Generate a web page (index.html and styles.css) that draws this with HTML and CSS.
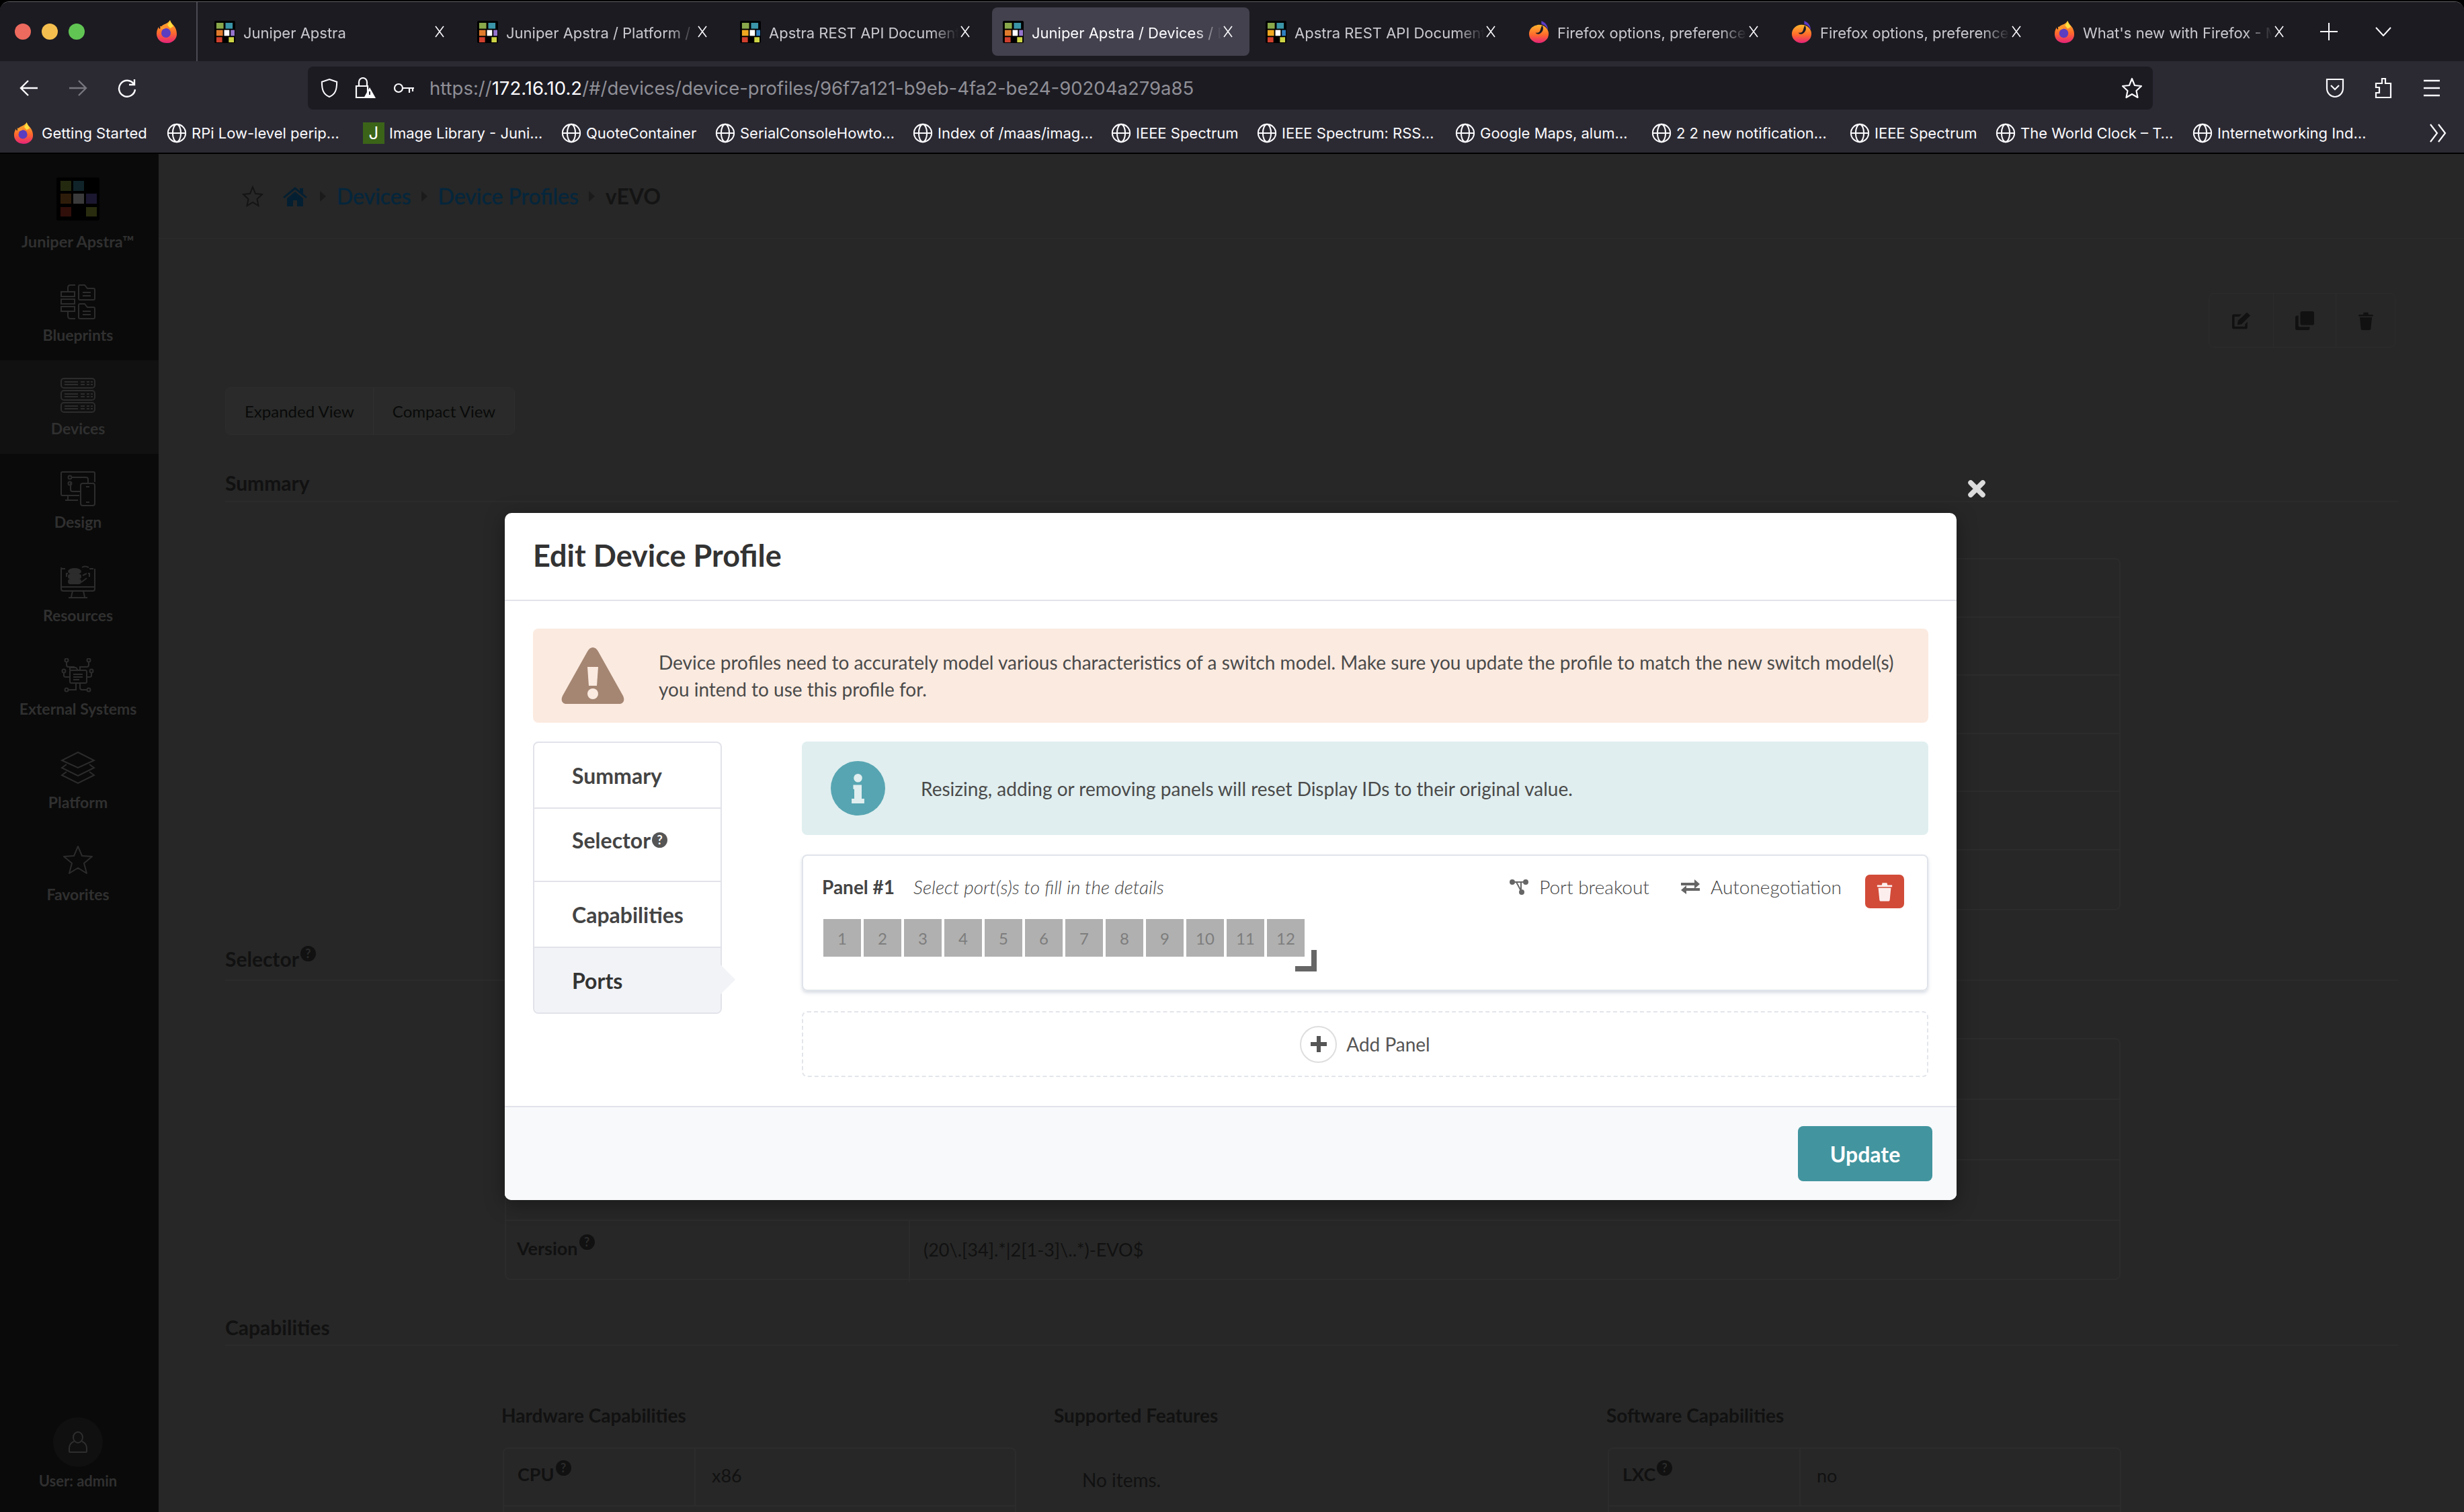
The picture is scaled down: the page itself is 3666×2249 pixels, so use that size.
FILE: index.html
```html
<!DOCTYPE html>
<html lang="en">

<head>
    <meta charset="UTF-8" />
    <meta name="viewport" content="width=device-width, initial-scale=1.0" />
    <title>Juniper Apstra / Devices</title>
    <link rel="stylesheet" href="styles.css">
</head>

<body>
    <svg class="defs" width="0" height="0">
        <defs>
            <linearGradient id="fx_body" x1="0" y1="0" x2="0" y2="1">
                <stop offset="0" stop-color="#ffb52e" />
                <stop offset="0.55" stop-color="#ff6a2b" />
                <stop offset="1" stop-color="#e5227a" />
            </linearGradient>
            <symbol id="firefox" viewBox="0 0 32 34">
                <path d="M21 0c1 4 4 6 7 10 3 5 3 9 3 11 0 7-6 13-15 13S1 28 1 20c0-5 2-8 3-10 0 2 1 3 2 3 1-4 4-6 7-7 3-1 6-3 8-6z" fill="url(#fx_body)" />
                <path d="M21 0c1 4 3 6 5 9l-5 3-4-5c2-2 3-4 4-7z" fill="#ffdf3f" />
                <circle cx="15" cy="19" r="7" fill="#5a3dc0" />
                <path d="M6 9c3 0 6 2 9 2-2 2-6 3-8 2z" fill="#ff9a2e" />
            </symbol>
            <symbol id="firefox_alt" viewBox="0 0 32 34">
                <ellipse cx="16" cy="20" rx="15" ry="14" fill="url(#fx_body)" />
                <path d="M20 0c7 3 10 8 10 14-2-5-5-8-10-9z" fill="#5b3bc4" />
                <path d="M21 7c3 4 2 10-4 13-3 1-5 0-6-2 3 1 6 0 7-3 1-2 1-5 3-8z" fill="#1c1b22" />
            </symbol>
            <symbol id="globe" viewBox="0 0 32 32">
                <g fill="none" stroke="#fbfbfe" stroke-width="2.2">
                    <circle cx="16" cy="16" r="14" />
                    <ellipse cx="16" cy="16" rx="6.5" ry="14" />
                    <path d="M2 16h28" />
                </g>
            </symbol>
            <symbol id="apstra_a" viewBox="0 0 32 34">
                <rect width="32" height="34" rx="2" fill="#000" />
                <rect x="3" y="3" width="11" height="9" fill="#8aa94b" />
                <rect x="17" y="3" width="11" height="9" fill="#3a95a8" />
                <rect x="3" y="14" width="10" height="9" fill="#e07b2c" />
                <rect x="15" y="14" width="8" height="9" fill="#fff" />
                <rect x="25" y="14" width="6" height="9" fill="#9575cd" />
                <rect x="3" y="25" width="9" height="8" fill="#d0402e" />
                <rect x="22" y="25" width="8" height="8" fill="#cdd445" />
            </symbol>
            <symbol id="apstra_b" viewBox="0 0 32 34">
                <rect width="32" height="34" rx="2" fill="#000" />
                <rect x="3" y="3" width="11" height="9" fill="#8aa94b" />
                <rect x="17" y="3" width="11" height="9" fill="#3a95a8" />
                <rect x="3" y="14" width="10" height="9" fill="#f0a820" />
                <rect x="15" y="14" width="8" height="9" fill="#fff" />
                <rect x="25" y="14" width="6" height="9" fill="#2f80c0" />
                <rect x="3" y="25" width="9" height="8" fill="#d0402e" />
                <rect x="22" y="25" width="8" height="8" fill="#cdd445" />
            </symbol>
            <symbol id="tab_x" viewBox="0 0 16 20">
                <path d="M2 2l12 16M14 2L2 18" fill="none" stroke="#fbfbfe" stroke-width="1.6" />
            </symbol>
            <symbol id="trash" viewBox="0 0 28 34">
                <path d="M1 6h26v3H1zM10 2h8l1 4H9z" fill="currentColor" />
                <path d="M3 11h22l-2 20c0 2-1 3-3 3H8c-2 0-3-1-3-3z" fill="currentColor" />
            </symbol>
        </defs>
    </svg>

    <div class="window">
        <header class="tabstrip">
            <div class="tab_lead">
                <span class="light light_red"></span>
                <span class="light light_yellow"></span>
                <span class="light light_green"></span>
                <svg class="lead_fox"><use href="#firefox" /></svg>
            </div>
            <div class="tabs">
                <div class="tab">
                    <svg class="favicon"><use href="#apstra_a" /></svg>
                    <span class="tab_title">Juniper Apstra</span>
                    <svg class="tab_close"><use href="#tab_x" /></svg>
                </div>
                <div class="tab">
                    <svg class="favicon"><use href="#apstra_a" /></svg>
                    <span class="tab_title">Juniper Apstra / Platform /</span>
                    <svg class="tab_close"><use href="#tab_x" /></svg>
                </div>
                <div class="tab">
                    <svg class="favicon"><use href="#apstra_b" /></svg>
                    <span class="tab_title">Apstra REST API Document</span>
                    <svg class="tab_close"><use href="#tab_x" /></svg>
                </div>
                <div class="tab tab_active">
                    <svg class="favicon"><use href="#apstra_a" /></svg>
                    <span class="tab_title">Juniper Apstra / Devices / D</span>
                    <svg class="tab_close"><use href="#tab_x" /></svg>
                </div>
                <div class="tab">
                    <svg class="favicon"><use href="#apstra_b" /></svg>
                    <span class="tab_title">Apstra REST API Document</span>
                    <svg class="tab_close"><use href="#tab_x" /></svg>
                </div>
                <div class="tab">
                    <svg class="favicon"><use href="#firefox_alt" /></svg>
                    <span class="tab_title">Firefox options, preference</span>
                    <svg class="tab_close"><use href="#tab_x" /></svg>
                </div>
                <div class="tab">
                    <svg class="favicon"><use href="#firefox_alt" /></svg>
                    <span class="tab_title">Firefox options, preference</span>
                    <svg class="tab_close"><use href="#tab_x" /></svg>
                </div>
                <div class="tab">
                    <svg class="favicon"><use href="#firefox" /></svg>
                    <span class="tab_title">What's new with Firefox - M</span>
                    <svg class="tab_close"><use href="#tab_x" /></svg>
                </div>
            </div>
            <svg class="strip_plus" viewBox="0 0 26 26"><path d="M13 0v26M0 13h26" stroke="#fbfbfe" stroke-width="2" /></svg>
            <svg class="strip_more" viewBox="0 0 24 14"><path d="M1 1l11 12L23 1" fill="none" stroke="#fbfbfe" stroke-width="2" /></svg>
        </header>

        <div class="toolbar">
            <div class="nav_btns">
                <svg class="nav_icon" viewBox="0 0 28 28"><path d="M27 14H3M13 3L2 14l11 11" fill="none" stroke="#fbfbfe" stroke-width="2.4" /></svg>
                <svg class="nav_icon" viewBox="0 0 28 28"><path d="M1 14h24M15 3l11 11-11 11" fill="none" stroke="#77767f" stroke-width="2.4" /></svg>
                <svg class="nav_icon" viewBox="0 0 28 28"><path d="M24 8a12 12 0 1 0 2 8M25 1v8h-8" fill="none" stroke="#fbfbfe" stroke-width="2.4" /></svg>
            </div>
            <div class="urlbar">
                <svg class="url_shield" viewBox="0 0 28 32"><path d="M14 2l12 4c0 12-2 20-12 24C4 26 2 18 2 6z" fill="none" stroke="#fbfbfe" stroke-width="2.2" /></svg>
                <svg class="url_lock" viewBox="0 0 32 32"><path d="M7 13V7a6 6 0 0 1 12 0v6M3 13h17v17H3z" fill="none" stroke="#fbfbfe" stroke-width="2.2" /><path d="M23 15l9 16H14z" fill="#fbfbfe" /><path d="M23 21v5" stroke="#2b2a33" stroke-width="2" /></svg>
                <svg class="url_key" viewBox="0 0 32 20"><circle cx="8" cy="10" r="6" fill="none" stroke="#fbfbfe" stroke-width="2.2" /><path d="M14 10h17M24 10v7M29 10v5" fill="none" stroke="#fbfbfe" stroke-width="2.2" /></svg>
                <div class="url_text">https://<span class="url_host">172.16.10.2</span>/#/devices/device-profiles/96f7a121-b9eb-4fa2-be24-90204a279a85</div>
                <svg class="url_star" viewBox="0 0 32 32"><path d="M16 2l4 10 10 1-7.500 7 2 10L16 25l-8.500 5 2-10L2 13l10-1z" fill="none" stroke="#fbfbfe" stroke-width="2.2" stroke-linejoin="round" /></svg>
            </div>
            <div class="tool_right">
                <svg class="tool_icon" viewBox="0 0 28 32"><path d="M2 3h24v13c0 8-6 13-12 13S2 24 2 16z" fill="none" stroke="#fbfbfe" stroke-width="2.2" /><path d="M8 12l6 6 6-6" fill="none" stroke="#fbfbfe" stroke-width="2.2" /></svg>
                <svg class="tool_icon" viewBox="0 0 28 32"><path d="M12 2h5v7h8v21H3v-7h5v-8H3V9h9z" fill="none" stroke="#fbfbfe" stroke-width="2.2" /></svg>
                <svg class="tool_icon" viewBox="0 0 28 32"><path d="M2 5h24M2 16h24M2 27h24" stroke="#fbfbfe" stroke-width="2.4" /></svg>
            </div>
        </div>

        <nav class="bookmarks">
            <a class="bm"><svg class="bm_fox"><use href="#firefox" /></svg><span>Getting Started</span></a>
            <a class="bm"><svg class="bm_icon"><use href="#globe" /></svg><span>RPi Low-level perip…</span></a>
            <a class="bm"><span class="bm_j">J</span><span>Image Library - Juni…</span></a>
            <a class="bm"><svg class="bm_icon"><use href="#globe" /></svg><span>QuoteContainer</span></a>
            <a class="bm"><svg class="bm_icon"><use href="#globe" /></svg><span>SerialConsoleHowto…</span></a>
            <a class="bm"><svg class="bm_icon"><use href="#globe" /></svg><span>Index of /maas/imag…</span></a>
            <a class="bm"><svg class="bm_icon"><use href="#globe" /></svg><span>IEEE Spectrum</span></a>
            <a class="bm"><svg class="bm_icon"><use href="#globe" /></svg><span>IEEE Spectrum: RSS…</span></a>
            <a class="bm"><svg class="bm_icon"><use href="#globe" /></svg><span>Google Maps, alum…</span></a>
            <a class="bm"><svg class="bm_icon"><use href="#globe" /></svg><span>2 2 new notification…</span></a>
            <a class="bm"><svg class="bm_icon"><use href="#globe" /></svg><span>IEEE Spectrum</span></a>
            <a class="bm"><svg class="bm_icon"><use href="#globe" /></svg><span>The World Clock – T…</span></a>
            <a class="bm"><svg class="bm_icon"><use href="#globe" /></svg><span>Internetworking Ind…</span></a>
            <svg class="bm_more" viewBox="0 0 26 30"><path d="M2 2l10 13L2 28M14 2l10 13-10 13" fill="none" stroke="#fbfbfe" stroke-width="2.2" /></svg>
        </nav>

        <div class="app">
            <aside class="sidebar">
                <div class="brand">
                    <svg class="brand_logo" viewBox="0 0 64 64">
                        <rect width="64" height="64" rx="3" fill="#000" />
                        <rect x="6" y="5" width="16" height="15" fill="#23290f" />
                        <rect x="25" y="5" width="16" height="15" fill="#0f2328" />
                        <rect x="6" y="24" width="16" height="15" fill="#2e1c0a" />
                        <rect x="25" y="24" width="16" height="15" fill="#3a3a3a" />
                        <rect x="44" y="24" width="16" height="15" fill="#1c1730" />
                        <rect x="6" y="44" width="16" height="14" fill="#300e0a" />
                        <rect x="44" y="44" width="16" height="14" fill="#292c0e" />
                    </svg>
                    <div class="brand_name">Juniper Apstra™</div>
                </div>
                <div class="side_item">
                    <svg class="side_icon" viewBox="0 0 52 52">
                        <rect x="1" y="11" width="20" height="7" /><rect x="1" y="22" width="20" height="7" /><rect x="1" y="33" width="20" height="7" />
                        <path d="M11 11V5q0-4 4-4h7M11 40v7q0 4 4 4h7M27 3q0-2 2-2h7l4 5h9q2 0 2 2v13q0 2-2 2H29q-2 0-2-2zM27 31q0-2 2-2h7l4 5h9q2 0 2 2v13q0 2-2 2H29q-2 0-2-2zM33 12h12M33 17h12M33 40h12M33 45h12" />
                    </svg>
                    <span class="side_label">Blueprints</span>
                </div>
                <div class="side_item side_active">
                    <svg class="side_icon" viewBox="0 0 52 52">
                        <rect x="1" y="1" width="50" height="14" rx="4" /><rect x="1" y="19" width="50" height="14" rx="4" /><rect x="1" y="37" width="50" height="14" rx="4" />
                        <path d="M6 6h20M6 10h20M30 6h6M30 10h6M39 6h4M39 10h4M45 6h3M45 10h3M6 24h20M6 28h20M30 24h6M30 28h6M39 24h4M39 28h4M45 24h3M45 28h3M6 42h20M6 46h20M30 42h6M30 46h6M39 42h4M39 46h4M45 42h3M45 46h3" />
                    </svg>
                    <span class="side_label">Devices</span>
                </div>
                <div class="side_item">
                    <svg class="side_icon" viewBox="0 0 52 52">
                        <path d="M28 36H3q-2 0-2-2V3q0-2 2-2h46q2 0 2 2v13M11 36v7M7 43h19M17 9h21q3 0 3 3v5M17 18h-2v9q0 3 3 3h12" />
                        <circle cx="14" cy="9" r="2.500" /><circle cx="14" cy="18" r="2.500" />
                        <rect x="30" y="18" width="21" height="33" rx="3" />
                        <path d="M38 23h5M38 46h5" />
                    </svg>
                    <span class="side_label">Design</span>
                </div>
                <div class="side_item">
                    <svg class="side_icon" viewBox="0 0 52 52">
                        <path d="M7 6H3q-2 0-2-2v0M1 6v30q0 3 3 3h44q3 0 3-3V6M43 6h6M1 33h50M18 39l-2 9M34 39l2 9M12 49h28M11 13H9v5M41 13h2v5M32 4q4-3 10 0" />
                        <ellipse cx="21" cy="10" rx="9" ry="4" class="side_fill" /><rect x="12" y="15" width="18" height="5" rx="2" class="side_fill" /><rect x="12" y="22" width="18" height="6" rx="3" class="side_fill" />
                        <path d="M33 16l6-3M31 26l8-6" />
                    </svg>
                    <span class="side_label">Resources</span>
                </div>
                <div class="side_item">
                    <svg class="side_icon" viewBox="0 0 52 52">
                        <rect x="14" y="18" width="25" height="19" rx="2" />
                        <path d="M14 18v-4h9l3 4M19 24h14M19 28h14M19 32h9M9 5v5q0 3 3 3h9M42 5v5q0 3-3 3H29v4M5 21v5q0 2 3 2h5M46 21v5q0 2-3 2h-4M23 38v9h-12M29 38v6q0 3 3 3h8" />
                        <circle cx="9" cy="3" r="2.500" /><circle cx="42" cy="3" r="2.500" /><circle cx="5" cy="19" r="2.500" /><circle cx="46" cy="19" r="2.500" /><circle cx="9" cy="47" r="2.500" /><circle cx="42" cy="47" r="2.500" />
                    </svg>
                    <span class="side_label">External Systems</span>
                </div>
                <div class="side_item">
                    <svg class="side_icon" viewBox="0 0 52 52">
                        <path d="M26 1l24 12-24 11L2 13z" />
                        <path d="M9 19L2 24l24 12 24-12-7-5M9 30l-7 5 24 12 24-12-7-5" />
                    </svg>
                    <span class="side_label">Platform</span>
                </div>
                <div class="side_item side_fav">
                    <svg class="side_icon side_star" viewBox="0 0 44 44">
                        <path d="M22 2l6 14 15 1-12 10 4 15-13-8-13 8 4-15L1 17l15-1z" stroke-linejoin="round" />
                    </svg>
                    <span class="side_label">Favorites</span>
                </div>
                <div class="side_user">
                    <span class="user_circle">
                        <svg class="user_icon" viewBox="0 0 30 32">
                            <ellipse cx="15" cy="9" rx="7" ry="8" />
                            <path d="M9 15q-7 3-7 10v5q0 1 1 1h24q1 0 1-1v-5q0-7-7-10" />
                        </svg>
                    </span>
                    <span class="side_label">User: admin</span>
                </div>
            </aside>

            <main class="main">
                <div class="crumbs">
                    <svg class="crumb_star" viewBox="0 0 32 32"><path d="M16 2l4 10 10 1-7.500 7 2 10L16 25l-8.500 5 2-10L2 13l10-1z" fill="none" stroke="#141414" stroke-width="2" /></svg>
                    <svg class="crumb_home" viewBox="0 0 36 30"><path d="M18 1L0 16l2 2L18 5l16 13 2-2-6-5V3h-5v4zM6 18l12-10 12 10v12h-9v-9h-6v9H6z" fill="#041f31" /></svg>
                    <span class="crumb_sep"></span>
                    <a class="crumb_link">Devices</a>
                    <span class="crumb_sep"></span>
                    <a class="crumb_link">Device Profiles</a>
                    <span class="crumb_sep"></span>
                    <span class="crumb_now">vEVO</span>
                </div>

                <div class="page">
                    <div class="actions">
                        <div class="action_group">
                            <span class="action_btn">
                                <svg class="action_icon" viewBox="0 0 32 30">
                                    <path d="M26 17v9q0 3-3 3H3q-3 0-3-3V7q0-3 3-3h13l-4 4H4v17h18v-4z" fill="#111" />
                                    <path d="M9 22l1-7L25 1l6 5-15 15z" fill="#111" />
                                </svg>
                            </span>
                            <span class="action_btn">
                                <svg class="action_icon" viewBox="0 0 30 30">
                                    <rect x="8" y="0" width="22" height="22" rx="3" fill="#111" />
                                    <path d="M5 7v16q0 2 2 2h16v2q0 3-3 3H3q-3 0-3-3V10q0-3 3-3z" fill="#111" />
                                </svg>
                            </span>
                            <span class="action_btn action_trash">
                                <svg class="action_icon"><use href="#trash" /></svg>
                            </span>
                        </div>
                    </div>

                    <div class="views">
                        <span class="view_btn">Expanded View</span>
                        <span class="view_btn">Compact View</span>
                    </div>

                    <h2 class="section_head head_summary">Summary</h2>
                    <div class="back_table summary_table">
                        <div class="back_row"></div>
                        <div class="back_row"></div>
                        <div class="back_row"></div>
                        <div class="back_row"></div>
                        <div class="back_row"></div>
                        <div class="back_row"></div>
                    </div>

                    <h2 class="section_head head_selector">Selector<span class="help help_back">?</span></h2>
                    <div class="back_table selector_table">
                        <div class="back_row"></div>
                        <div class="back_row"></div>
                        <div class="back_row"></div>
                        <div class="back_row">
                            <span class="back_key">Version<span class="help help_back">?</span></span>
                            <span class="back_val">(20\.[34].*|2[1-3]\..*)-EVO$</span>
                        </div>
                    </div>

                    <h2 class="section_head head_caps">Capabilities</h2>
                    <div class="caps_grid">
                        <div>
                            <h3 class="caps_head">Hardware Capabilities</h3>
                            <div class="caps_table">
                                <span class="caps_key">CPU<span class="help help_back">?</span></span>
                                <span class="caps_val">x86</span>
                            </div>
                        </div>
                        <div>
                            <h3 class="caps_head">Supported Features</h3>
                            <div class="caps_empty">No items.</div>
                        </div>
                        <div>
                            <h3 class="caps_head">Software Capabilities</h3>
                            <div class="caps_table">
                                <span class="caps_key">LXC<span class="help help_back">?</span></span>
                                <span class="caps_val">no</span>
                            </div>
                        </div>
                    </div>
                </div>
            </main>
        </div>
    </div>

    <svg class="modal_close" viewBox="0 0 28 28"><path d="M5 5l18 18M23 5L5 23" stroke="#dcdcdc" stroke-width="7.500" stroke-linecap="round" /></svg>

    <section class="modal">
        <div class="modal_head">Edit Device Profile</div>
        <div class="modal_body">
            <div class="alert alert_warn">
                <svg class="warn_icon" viewBox="0 0 94 84">
                    <path d="M47 0c3 0 6 2 8 6l37 66c3 6 1 12-6 12H8c-7 0-9-6-6-12L39 6c2-4 5-6 8-6z" fill="#a58672" />
                    <path d="M39 29h16l-2 28H41z" fill="#fbeae0" />
                    <circle cx="47" cy="69" r="8" fill="#fbeae0" />
                </svg>
                <p class="alert_text">Device profiles need to accurately model various characteristics of a switch model. Make sure you update the profile to match the new switch model(s) you intend to use this profile for.</p>
            </div>

            <div class="edit_row">
                <div class="edit_tabs">
                    <div class="edit_tab tab_summary">Summary</div>
                    <div class="edit_tab tab_selector">Selector<span class="help">?</span></div>
                    <div class="edit_tab tab_caps">Capabilities</div>
                    <div class="edit_tab tab_ports">Ports</div>
                </div>

                <div class="edit_content">
                    <div class="alert alert_info">
                        <span class="info_circle">
                            <svg class="info_glyph" viewBox="0 0 24 56">
                                <circle cx="12" cy="8" r="8" fill="#e0eeef" />
                                <path d="M3 21h16v26h5v9H0v-9h5V29H3z" fill="#e0eeef" />
                            </svg>
                        </span>
                        <p class="alert_text">Resizing, adding or removing panels will reset Display IDs to their original value.</p>
                    </div>

                    <div class="panel_card">
                        <div class="panel_head">
                            <span class="panel_name">Panel #1</span>
                            <span class="panel_hint">Select port(s)s to fill in the details</span>
                            <span class="panel_tool panel_breakout">
                                <svg class="tool_glyph" viewBox="0 0 28 24">
                                    <circle cx="4" cy="5" r="3" /><circle cx="24" cy="5" r="3" /><circle cx="18" cy="20" r="3" />
                                    <path d="M4 5h20M10 5l8 15M17 5v15" />
                                </svg>
                                Port breakout
                            </span>
                            <span class="panel_tool panel_auto">
                                <svg class="tool_glyph" viewBox="0 0 28 24">
                                    <path class="glyph_solid" d="M0 6h20V1l8 7-8 7v-5H0zM28 14v4H8v5l-8-6 8-7v4z" />
                                </svg>
                                Autonegotiation
                            </span>
                            <span class="panel_delete"><svg class="delete_icon"><use href="#trash" /></svg></span>
                        </div>
                        <div class="ports">
                            <span class="port">1</span><span class="port">2</span><span class="port">3</span><span class="port">4</span><span class="port">5</span><span class="port">6</span><span class="port">7</span><span class="port">8</span><span class="port">9</span><span class="port">10</span><span class="port">11</span><span class="port">12</span>
                            <span class="port_handle"></span>
                        </div>
                    </div>

                    <div class="add_panel">
                        <span class="add_circle">
                            <svg class="add_plus" viewBox="0 0 24 24"><path d="M9 0h6v9h9v6h-9v9H9v-9H0V9h9z" fill="#555" /></svg>
                        </span>
                        Add Panel
                    </div>
                </div>
            </div>
        </div>
        <div class="modal_foot">
            <button type="button" class="update_btn">Update</button>
        </div>
    </section>
</body>

</html>
```

FILE: styles.css
```css
* {
    box-sizing: border-box;
}

html,
body {
    margin: 0;
    width: 3666px;
    height: 2249px;
    overflow: hidden;
    background: #000;
    font-family: "Lato", "Liberation Sans", sans-serif;
}

.defs {
    position: absolute;
}

.window {
    margin-top: 2px;
    height: 2247px;
    display: flex;
    flex-direction: column;
    border-top: 1px solid #5e5e62;
    border-radius: 14px 14px 0 0;
    overflow: hidden;
}

/* browser tabs */
.tabstrip {
    flex: none;
    height: 88px;
    display: flex;
    align-items: center;
    background: #1c1b22;
    font-family: "Inter", "Liberation Sans", sans-serif;
}

.tab_lead {
    flex: none;
    width: 294px;
    height: 88px;
    display: flex;
    align-items: center;
    padding-left: 22px;
    gap: 16px;
    border-right: 2px solid #4b4a52;
}

.light {
    width: 24px;
    height: 24px;
    border-radius: 50%;
}

.light_red {
    background: #ed6a5e;
}

.light_yellow {
    background: #f5bf4f;
}

.light_green {
    background: #61c554;
}

.lead_fox {
    width: 32px;
    height: 34px;
    margin-left: 90px;
}

.tabs {
    display: flex;
    gap: 8px;
    padding-left: 9px;
}

.tab {
    width: 383px;
    height: 72px;
    padding: 0 16px;
    display: flex;
    align-items: center;
    border-radius: 8px;
    color: #c9c9cf;
    font-size: 22px;
}

.tab_active {
    background: #42414d;
    color: #fbfbfe;
}

.favicon {
    flex: none;
    width: 31px;
    height: 33px;
}

.tab_title {
    flex: 1;
    min-width: 0;
    margin: 4px -8px 0 12px;
    white-space: nowrap;
    overflow: hidden;
    -webkit-mask-image: linear-gradient(to right, #000 84%, transparent 98%);
    mask-image: linear-gradient(to right, #000 84%, transparent 98%);
}

.tab_close {
    flex: none;
    width: 16px;
    height: 20px;
    margin: 0 8px 0 4px;
}

.strip_plus {
    width: 26px;
    height: 26px;
    margin-left: 29px;
}

.strip_more {
    width: 24px;
    height: 14px;
    margin-left: 56px;
}

/* url row */
.toolbar {
    flex: none;
    height: 72px;
    padding-top: 8px;
    display: flex;
    background: #2b2a33;
}

.nav_btns {
    flex: none;
    width: 458px;
    display: flex;
    align-items: center;
    padding-left: 29px;
    gap: 45px;
}

.nav_icon {
    width: 28px;
    height: 28px;
}

.urlbar {
    flex: none;
    width: 2745px;
    display: flex;
    align-items: center;
    background: #1c1b22;
    border-radius: 8px;
    padding-left: 19px;
    font-family: "Inter", "Liberation Sans", sans-serif;
}

.url_shield {
    width: 26px;
    height: 32px;
}

.url_lock {
    width: 32px;
    height: 32px;
    margin-left: 24px;
}

.url_key {
    width: 32px;
    height: 20px;
    margin-left: 26px;
}

.url_text {
    flex: 1;
    margin-left: 22px;
    font-size: 27.500px;
    color: #8f8f96;
    white-space: nowrap;
}

.url_host {
    color: #fbfbfe;
}

.url_star {
    width: 32px;
    height: 32px;
    margin-right: 15px;
}

.tool_right {
    flex: 1;
    display: flex;
    align-items: center;
    padding-left: 257px;
    gap: 44px;
}

.tool_icon {
    width: 28px;
    height: 32px;
}

/* bookmarks row */
.bookmarks {
    flex: none;
    height: 66px;
    padding: 8px 0 2px 20px;
    display: grid;
    grid-template-columns: 228px 292px 295px 229px 294px 295px 217px 295px 292px 295px 217px 293px 352px 26px;
    align-items: center;
    background: #2b2a33;
    border-bottom: 2px solid #000;
    color: #fbfbfe;
    font-family: "Inter", "Liberation Sans", sans-serif;
    font-size: 22px;
}

.bm {
    display: flex;
    align-items: center;
    gap: 7px;
    white-space: nowrap;
}

.bm_icon {
    flex: none;
    width: 30px;
    height: 30px;
}

.bm_fox {
    flex: none;
    width: 30px;
    height: 32px;
    margin-right: 5px;
}

.bm_j {
    flex: none;
    width: 32px;
    height: 32px;
    background: #3b6418;
    color: #fff;
    font-size: 26px;
    line-height: 32px;
    text-align: center;
}

.bm_more {
    width: 26px;
    height: 30px;
}

/* page behind the dialog */
.app {
    flex: 1;
    min-height: 0;
    display: flex;
}

.sidebar {
    flex: none;
    width: 236px;
    display: flex;
    flex-direction: column;
    background: #0a0a0a;
    color: #303030;
    font-weight: 700;
}

.brand {
    height: 168px;
    padding: 35px 4px 0 0;
    display: flex;
    flex-direction: column;
    align-items: center;
}

.brand_logo {
    width: 64px;
    height: 64px;
}

.brand_name {
    margin-top: 17px;
    font-size: 23.500px;
    line-height: 28px;
    white-space: nowrap;
}

.side_item {
    height: 139px;
    padding: 26px 4px 0 0;
    display: flex;
    flex-direction: column;
    align-items: center;
}

.side_active {
    background: #111;
}

.side_icon {
    width: 52px;
    height: 52px;
    fill: none;
    stroke: #2c2c2c;
    stroke-width: 2;
}

.side_fill {
    fill: #2c2c2c;
}

.side_star {
    height: 44px;
    width: 44px;
}

.side_label {
    margin-top: 8px;
    font-size: 23px;
    line-height: 30px;
    white-space: nowrap;
}

.side_fav .side_label {
    margin-top: 14px;
}

.side_user {
    margin-top: auto;
    padding: 0 4px 31px 0;
    display: flex;
    flex-direction: column;
    align-items: center;
}

.user_circle {
    width: 74px;
    height: 74px;
    display: flex;
    align-items: center;
    justify-content: center;
    border-radius: 50%;
    background: #101010;
}

.user_icon {
    width: 30px;
    height: 32px;
    fill: none;
    stroke: #2e2e2e;
    stroke-width: 2;
}

.side_user .side_label {
    margin-top: 6px;
    font-size: 22px;
}

.main {
    flex: 1;
    min-width: 0;
    background: #272727;
    color: #111;
}

.crumbs {
    height: 126px;
    padding: 0 0 0 124px;
    display: flex;
    align-items: center;
    border-bottom: 1px solid #2c2c2c;
    font-size: 32px;
}

.crumb_star {
    width: 32px;
    height: 32px;
}

.crumb_home {
    width: 36px;
    height: 30px;
    margin: 0 4px 0 29px;
}

.crumb_sep {
    width: 0;
    height: 0;
    margin: 0 16px 0 15px;
    border-left: 9px solid #1b1b1b;
    border-top: 8px solid transparent;
    border-bottom: 8px solid transparent;
}

.crumb_link {
    color: #05263c;
    -webkit-text-stroke: 0.5px #05263c;
}

.crumb_now {
    color: #141414;
    font-weight: 700;
}

.page {
    padding: 0 98px 0 99px;
}

.actions {
    margin-top: 81px;
    display: flex;
    justify-content: flex-end;
    padding-right: 4px;
}

.action_group {
    height: 81px;
    display: flex;
    border: 1px solid #2c2c2c;
    border-radius: 8px;
}

.action_btn {
    width: 93px;
    display: flex;
    align-items: center;
    justify-content: center;
    border-left: 1px solid #2c2c2c;
}

.action_btn:first-child {
    width: 95px;
    border-left: 0;
}

.action_trash {
    width: 88px;
    color: #111;
}

.action_icon {
    width: 28px;
    height: 28px;
}

.views {
    margin-top: 59px;
    height: 71px;
    display: inline-flex;
    border: 1px solid #2c2d2c;
    border-radius: 8px;
    background: #292a29;
    font-size: 24px;
    color: #0a0a0a;
}

.view_btn {
    padding: 0 28px;
    display: flex;
    align-items: center;
    border-left: 1px solid #2f302f;
}

.view_btn:first-child {
    border-left: 0;
}

.section_head {
    margin: 51px 0 0;
    font-size: 30px;
    line-height: 40px;
    font-weight: 700;
    color: #111;
    border-bottom: 2px solid #2b2b2b;
}

.head_summary {
    padding-bottom: 7px;
}

.head_selector {
    margin-top: 52px;
    padding-bottom: 11px;
}

.head_caps {
    margin-top: 50px;
    padding-bottom: 6px;
}

.help {
    display: inline-block;
    width: 23px;
    height: 23px;
    margin-left: 2px;
    border-radius: 50%;
    background: #555;
    color: #fff;
    font-size: 18px;
    font-weight: 700;
    line-height: 23px;
    text-align: center;
    vertical-align: 16px;
}

.help_back {
    background: #111;
    color: #2b2b2b;
    vertical-align: 13px;
}

.back_table {
    margin-left: 416px;
    width: 2404px;
    border: 2px solid #2c2c2c;
    border-radius: 8px;
}

.summary_table {
    margin-top: 83px;
    height: 524px;
}

.summary_table .back_row {
    height: 86.500px;
}

.selector_table {
    margin-top: 85px;
    height: 360px;
}

.back_row {
    height: 90px;
    display: flex;
    align-items: center;
    border-bottom: 2px solid #2c2c2c;
    font-size: 27px;
}

.back_row:last-child {
    border-bottom: 0;
}

.back_key {
    width: 601px;
    padding: 0 0 8px 16px;
    font-weight: 700;
    line-height: 82px;
    border-right: 2px solid #2c2c2c;
}

.back_val {
    padding: 0 0 6px 20px;
}

.caps_grid {
    margin-top: 83px;
    display: grid;
    grid-template-columns: repeat(3, 764px);
    column-gap: 58px;
    margin-left: 413px;
}

.caps_head {
    margin: 0 0 28px -2px;
    font-size: 28px;
    line-height: 40px;
    font-weight: 700;
    color: #111;
}

.caps_table {
    height: 120px;
    display: flex;
    align-items: flex-start;
    border: 2px solid #2c2c2c;
    border-radius: 8px;
    font-size: 27px;
}

.caps_key {
    width: 285px;
    height: 86px;
    padding-left: 20px;
    font-weight: 700;
    line-height: 76px;
    border-right: 2px solid #2c2c2c;
    border-bottom: 2px solid #2c2c2c;
}

.caps_val {
    flex: 1;
    height: 86px;
    padding-left: 24px;
    line-height: 80px;
    border-bottom: 2px solid #2c2c2c;
}

.caps_empty {
    padding: 30px 0 0 40px;
    font-size: 28px;
    line-height: 36px;
}

/* dialog */
.modal_close {
    position: absolute;
    left: 2927px;
    top: 713px;
    width: 28px;
    height: 28px;
}

.modal {
    position: absolute;
    left: 751px;
    top: 763px;
    width: 2160px;
    height: 1022px;
    display: flex;
    flex-direction: column;
    background: #fff;
    border-radius: 10px;
    box-shadow: 0 6px 30px rgba(0, 0, 0, 0.35);
    overflow: hidden;
    color: #4a4a4a;
}

.modal_head {
    flex: none;
    height: 131px;
    padding: 0 0 3px 42px;
    display: flex;
    align-items: center;
    border-bottom: 2px solid #e2e3ea;
    font-size: 45px;
    font-weight: 700;
    color: #333;
}

.modal_body {
    flex: 1;
    padding: 41px 42px 0;
}

.alert {
    display: flex;
    align-items: center;
    border-radius: 8px;
}

.alert_warn {
    height: 140px;
    padding-left: 42px;
    background: #fbeae0;
}

.warn_icon {
    flex: none;
    width: 94px;
    height: 84px;
    margin-right: 51px;
}

.alert_text {
    margin: 0;
    font-size: 28px;
    line-height: 40px;
}

.edit_row {
    margin-top: 28px;
    display: flex;
    gap: 119px;
}

.edit_tabs {
    flex: none;
    width: 281px;
    height: 405px;
    border: 2px solid #e2e3ea;
    border-radius: 8px;
    font-size: 32px;
    font-weight: 700;
    color: #444;
}

.edit_tab {
    padding-left: 56px;
    display: flex;
    align-items: center;
    border-bottom: 2px solid #e2e3ea;
}

.tab_summary {
    height: 98px;
}

.tab_selector {
    height: 109px;
    padding-bottom: 14px;
}

.tab_caps {
    height: 98px;
}

.tab_ports {
    position: relative;
    height: 96px;
    background: #f2f3f7;
    border-bottom: 0;
    border-radius: 0 0 6px 6px;
    color: #333;
}

/* pointer sticking out of the selected tab */
.tab_ports::after {
    content: "";
    position: absolute;
    left: 100%;
    top: 25px;
    width: 22px;
    height: 44px;
    background: #f2f3f7;
    clip-path: polygon(0 0, 100% 50%, 0 100%);
}

.edit_content {
    flex: 1;
    min-width: 0;
}

.alert_info {
    height: 139px;
    padding-left: 43px;
    background: #e0eeef;
}

.info_circle {
    flex: none;
    width: 81px;
    height: 81px;
    margin-right: 53px;
    display: flex;
    align-items: center;
    justify-content: center;
    border-radius: 50%;
    background: #57a5b2;
}

.info_glyph {
    width: 19px;
    height: 44px;
}

.panel_card {
    margin-top: 29px;
    height: 203px;
    padding: 28px 34px 0 30px;
    border: 2px solid #e0e4ea;
    border-radius: 8px;
    box-shadow: 0 3px 5px rgba(170, 180, 195, 0.45);
}

.panel_head {
    display: flex;
    align-items: flex-start;
    line-height: 36px;
    font-size: 28px;
}

.panel_name {
    margin-left: -2px;
    font-weight: 700;
    color: #444;
}

.panel_hint {
    margin-left: 28px;
    font-weight: 300;
    font-style: italic;
    color: #444;
}

.panel_tool {
    display: flex;
    align-items: center;
    gap: 16px;
    font-weight: 300;
    color: #444;
}

.panel_breakout {
    margin-left: auto;
}

.panel_auto {
    margin-left: 47px;
}

.tool_glyph {
    width: 28px;
    height: 24px;
    fill: #666;
    stroke: #666;
    stroke-width: 2;
}

.glyph_solid {
    stroke: none;
}

.panel_delete {
    width: 58px;
    height: 50px;
    margin-left: 35px;
    display: flex;
    align-items: center;
    justify-content: center;
    border-radius: 7px;
    background: #d14b38;
    color: #fdeeee;
}

.delete_icon {
    width: 24px;
    height: 32px;
}

.ports {
    position: relative;
    width: max-content;
    margin-top: 16px;
    display: flex;
    gap: 4px;
}

.port {
    width: 56px;
    height: 56px;
    display: flex;
    align-items: center;
    justify-content: center;
    background: #b0b0b0;
    color: #7d7d7d;
    font-size: 24px;
}

.port_handle {
    position: absolute;
    right: -18px;
    bottom: -22px;
    width: 32px;
    height: 32px;
    border-right: 8px solid #666;
    border-bottom: 8px solid #666;
}

.add_panel {
    margin-top: 30px;
    height: 98px;
    display: flex;
    align-items: center;
    justify-content: center;
    gap: 14px;
    border: 2px dashed #e2e5ea;
    border-radius: 8px;
    font-size: 28px;
    color: #555;
}

.add_circle {
    width: 55px;
    height: 55px;
    display: flex;
    align-items: center;
    justify-content: center;
    border: 2px solid #dedede;
    border-radius: 50%;
}

.add_plus {
    width: 24px;
    height: 24px;
}

.modal_foot {
    flex: none;
    height: 140px;
    padding: 28px 36px 0 0;
    display: flex;
    justify-content: flex-end;
    align-items: flex-start;
    background: #f8f9fb;
    border-top: 2px solid #e2e3ea;
}

.update_btn {
    width: 200px;
    height: 82px;
    border: none;
    border-radius: 8px;
    background: #42959f;
    color: #fff;
    font-family: inherit;
    font-size: 32px;
    font-weight: 700;
}
```
